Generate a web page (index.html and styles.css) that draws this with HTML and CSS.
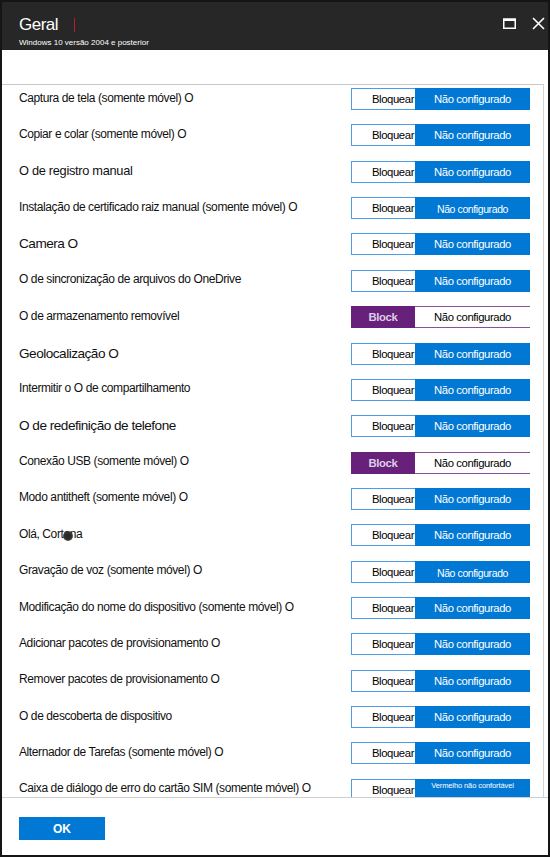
FILE: index.html
```html
<!DOCTYPE html>
<html lang="pt">
<head>
<meta charset="utf-8">
<title>Geral</title>
<link rel="stylesheet" href="styles.css">
</head>
<body>
<div class="window">
  <header class="header">
    <div class="titles">
      <div class="title-row"><span class="title">Geral</span><span class="title-mark"></span></div>
      <div class="subtitle">Windows 10 versão 2004 e posterior</div>
    </div>
    <div class="controls">
      <svg class="icon" width="13" height="11" viewBox="0 0 13 11"><rect x="0.75" y="1.25" width="11.5" height="9" fill="none" stroke="#fff" stroke-width="1.5"/><rect x="0" y="0.5" width="13" height="2.5" fill="#fff"/></svg>
      <svg class="icon close" width="13" height="13" viewBox="0 0 13 13"><path d="M1 1 L12 12 M12 1 L1 12" stroke="#fff" stroke-width="1.6" fill="none"/></svg>
    </div>
  </header>
  <div class="spacer"></div>
  <div class="scroll">
    <div class="row"><span class="label">Captura de tela (somente móvel) O</span><div class="toggle"><span class="seg-left">Bloquear</span><span class="seg-right">Não configurado</span></div></div>
    <div class="row"><span class="label">Copiar e colar (somente móvel) O</span><div class="toggle"><span class="seg-left">Bloquear</span><span class="seg-right">Não configurado</span></div></div>
    <div class="row"><span class="label label-md">O de registro manual</span><div class="toggle"><span class="seg-left">Bloquear</span><span class="seg-right">Não configurado</span></div></div>
    <div class="row"><span class="label">Instalação de certificado raiz manual (somente móvel) O</span><div class="toggle"><span class="seg-left">Bloquear</span><span class="seg-right seg-small">Não configurado</span></div></div>
    <div class="row"><span class="label label-lg">Camera O</span><div class="toggle"><span class="seg-left">Bloquear</span><span class="seg-right">Não configurado</span></div></div>
    <div class="row"><span class="label">O de sincronização de arquivos do OneDrive</span><div class="toggle"><span class="seg-left">Bloquear</span><span class="seg-right">Não configurado</span></div></div>
    <div class="row"><span class="label">O de armazenamento removível</span><div class="toggle toggle-block"><span class="seg-left">Block</span><span class="seg-right">Não configurado</span></div></div>
    <div class="row"><span class="label label-lg">Geolocalização O</span><div class="toggle"><span class="seg-left">Bloquear</span><span class="seg-right">Não configurado</span></div></div>
    <div class="row"><span class="label">Intermitir o O de compartilhamento</span><div class="toggle"><span class="seg-left">Bloquear</span><span class="seg-right">Não configurado</span></div></div>
    <div class="row"><span class="label label-lg">O de redefinição de telefone</span><div class="toggle"><span class="seg-left">Bloquear</span><span class="seg-right">Não configurado</span></div></div>
    <div class="row"><span class="label">Conexão USB (somente móvel) O</span><div class="toggle toggle-block"><span class="seg-left">Block</span><span class="seg-right">Não configurado</span></div></div>
    <div class="row"><span class="label">Modo antitheft (somente móvel) O</span><div class="toggle"><span class="seg-left">Bloquear</span><span class="seg-right">Não configurado</span></div></div>
    <div class="row"><span class="label">Olá, Cortana<span class="dot"></span></span><div class="toggle"><span class="seg-left">Bloquear</span><span class="seg-right">Não configurado</span></div></div>
    <div class="row"><span class="label">Gravação de voz (somente móvel) O</span><div class="toggle"><span class="seg-left">Bloquear</span><span class="seg-right seg-small">Não configurado</span></div></div>
    <div class="row"><span class="label">Modificação do nome do dispositivo (somente móvel) O</span><div class="toggle"><span class="seg-left">Bloquear</span><span class="seg-right">Não configurado</span></div></div>
    <div class="row"><span class="label">Adicionar pacotes de provisionamento O</span><div class="toggle"><span class="seg-left">Bloquear</span><span class="seg-right">Não configurado</span></div></div>
    <div class="row"><span class="label">Remover pacotes de provisionamento O</span><div class="toggle"><span class="seg-left">Bloquear</span><span class="seg-right">Não configurado</span></div></div>
    <div class="row"><span class="label">O de descoberta de dispositivo</span><div class="toggle"><span class="seg-left">Bloquear</span><span class="seg-right">Não configurado</span></div></div>
    <div class="row"><span class="label">Alternador de Tarefas (somente móvel) O</span><div class="toggle"><span class="seg-left">Bloquear</span><span class="seg-right">Não configurado</span></div></div>
    <div class="row"><span class="label">Caixa de diálogo de erro do cartão SIM (somente móvel) O</span><div class="toggle"><span class="seg-left">Bloquear</span><span class="seg-right seg-tiny">Vermelho não confortável</span></div></div>
  </div>
  <footer class="footer">
    <button class="ok" type="button">OK</button>
  </footer>
</div>
</body>
</html>
```

FILE: styles.css
```css
* { box-sizing: border-box; }

html, body {
  margin: 0;
  padding: 0;
  background: #ffffff;
}

body {
  font-family: "Liberation Sans", Arial, sans-serif;
  color: #000;
}

.window {
  width: 550px;
  height: 857px;
  border: 2px solid #151515;
  display: flex;
  flex-direction: column;
  background: #fff;
  overflow: hidden;
}

.header {
  height: 48px;
  flex: none;
  background: #272727;
  display: flex;
  justify-content: space-between;
  align-items: flex-start;
  padding: 0 0 0 17px;
}

.titles {
  padding-top: 12px;
}

.title-row {
  display: flex;
  align-items: center;
  height: 21px;
}

.title {
  color: #fff;
  font-size: 17px;
  letter-spacing: -0.5px;
  line-height: 21px;
}

.title-mark {
  width: 1px;
  height: 14px;
  background: #b3202c;
  margin-left: 16px;
}

.subtitle {
  color: #fff;
  font-size: 8px;
  line-height: 10px;
  margin-top: 3px;
  letter-spacing: 0;
}

.controls {
  display: flex;
  align-items: center;
  gap: 16px;
  padding-top: 15px;
  padding-right: 3px;
}

.icon { display: block; }

.spacer {
  height: 34px;
  flex: none;
}

.scroll {
  flex: none;
  height: 713px;
  border-top: 1px solid #c9c9c9;
  border-right: 1px solid #d4d4d4;
  margin-right: 4px;
  overflow: hidden;
  padding: 3px 13px 0 17px;
  display: flex;
  flex-direction: column;
  gap: 14.37px;
}

.row {
  display: flex;
  justify-content: space-between;
  align-items: center;
  height: 22px;
  flex: none;
}

.label {
  font-size: 12px;
  letter-spacing: -0.4px;
  color: #111;
  padding-bottom: 3px;
  white-space: nowrap;
  position: relative;
}

.label-md { font-size: 12.8px; letter-spacing: -0.3px; }
.label-lg { font-size: 13.6px; letter-spacing: -0.5px; padding-bottom: 1px; }

.dot {
  position: absolute;
  left: 44px;
  top: 4px;
  width: 10px;
  height: 10px;
  border-radius: 50%;
  background: radial-gradient(circle, #222 0%, #333 55%, rgba(60,60,60,0.6) 80%, rgba(80,80,80,0) 100%);
}

.toggle {
  display: flex;
  width: 179px;
  height: 22px;
  flex: none;
  border: 1px solid #4d9be3;
  font-size: 11.3px;
  letter-spacing: -0.4px;
}

.seg-left {
  width: 63px;
  background: #fff;
  color: #000;
  display: flex;
  align-items: center;
  justify-content: flex-end;
  padding-right: 1px;
}

.seg-right {
  flex: 1;
  background: #0078d4;
  color: #fff;
  display: flex;
  align-items: center;
  justify-content: center;
  margin: -1px -1px -1px 0;
}

.seg-small {
  font-size: 10.5px;
  padding-top: 2px;
}

.seg-tiny {
  font-size: 7.5px;
  letter-spacing: -0.1px;
  align-items: flex-start;
  padding-top: 2px;
}

.toggle-block {
  border: none;
  border-top: 1px solid #8b4fa0;
  border-bottom: 1px solid #8b4fa0;
}

.toggle-block .seg-left {
  width: 64px;
  background: #68217a;
  color: #ddcde6;
  font-weight: bold;
  justify-content: center;
  padding-right: 0;
  margin: -1px 0;
}

.toggle-block .seg-right {
  background: #fff;
  color: #000;
  margin: 0;
}

.footer {
  flex: 1;
  border-top: 1px solid #cfcfcf;
  padding: 19px 0 0 17px;
}

.ok {
  display: block;
  width: 86px;
  height: 23px;
  border: none;
  background: #0078d4;
  color: #fff;
  font-family: "Liberation Sans", Arial, sans-serif;
  font-weight: bold;
  font-size: 12px;
  padding: 0;
  margin: 0;
}
```
